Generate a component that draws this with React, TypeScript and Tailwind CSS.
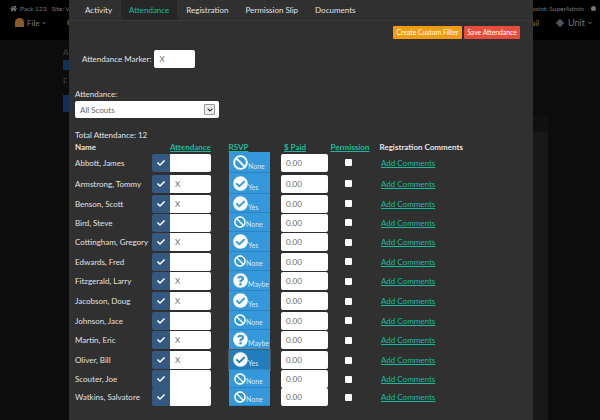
import { FaBan, FaCheck, FaCheckCircle, FaChevronDown, FaHome, FaQuestionCircle } from 'react-icons/fa';

type Rsvp = 'None' | 'Yes' | 'Maybe';

type Row = {
    name: string;
    marker: string;
    rsvp: Rsvp;
    height: string;
    big: boolean;
    active?: boolean;
};

const rows: Row[] = [
    { name: 'Abbott, James', marker: '', rsvp: 'None', height: 'h-[21px]', big: true },
    { name: 'Armstrong, Tommy', marker: 'X', rsvp: 'Yes', height: 'h-[21px]', big: true },
    { name: 'Benson, Scott', marker: 'X', rsvp: 'Yes', height: 'h-[19px]', big: true },
    { name: 'Bird, Steve', marker: '', rsvp: 'None', height: 'h-[19px]', big: false },
    { name: 'Cottingham, Gregory', marker: 'X', rsvp: 'Yes', height: 'h-[20px]', big: true },
    { name: 'Edwards, Fred', marker: '', rsvp: 'None', height: 'h-[19px]', big: false },
    { name: 'Fitzgerald, Larry', marker: 'X', rsvp: 'Maybe', height: 'h-[20px]', big: true },
    { name: 'Jacobson, Doug', marker: 'X', rsvp: 'Yes', height: 'h-[20px]', big: true },
    { name: 'Johnson, Jace', marker: '', rsvp: 'None', height: 'h-[19px]', big: false },
    { name: 'Martin, Eric', marker: 'X', rsvp: 'Maybe', height: 'h-[20px]', big: true },
    { name: 'Oliver, Bill', marker: 'X', rsvp: 'Yes', height: 'h-[20px]', big: true, active: true },
    { name: 'Scouter, Joe', marker: '', rsvp: 'None', height: 'h-[18px]', big: false },
    { name: 'Watkins, Salvatore', marker: '', rsvp: 'None', height: 'h-[18px]', big: false },
];

const tabs = ['Activity', 'Attendance', 'Registration', 'Permission Slip', 'Documents'];

function RsvpIcon({ rsvp, big }: { rsvp: Rsvp; big: boolean }) {
    const size = big ? 15 : 12;
    if (rsvp === 'Yes') return <FaCheckCircle size={size} className="shrink-0" />;
    if (rsvp === 'Maybe') return <FaQuestionCircle size={size} className="shrink-0" />;
    return <FaBan size={size} className="shrink-0" />;
}

function AttendanceRow({ row }: { row: Row }) {
    return (
        <div className={`flex items-center ${row.height}`}>
            <div className="w-[83px] whitespace-nowrap pl-[6px] text-[8px] text-[#e0e0e0]">{row.name}</div>
            <div className="flex h-[18px] w-[59px] items-center">
                <div className="flex h-full w-[18px] items-center justify-center rounded-l-[2px] bg-[#34587f] text-white">
                    <FaCheck size={8} />
                </div>
                <div className="flex h-full flex-1 items-center rounded-r-[2px] bg-white pl-[5px] text-[8px] text-[#666]">{row.marker}</div>
            </div>
            <div
                className={`ml-[18px] flex h-full w-[41px] items-end border-b border-[#2c85c2] text-white ${row.active ? 'bg-[#217dbb] outline outline-[#555]' : 'bg-[#3498db]'} ${row.big ? 'pl-[4px]' : 'pl-[5px]'}`}
            >
                <div className="flex items-end self-center">
                    <RsvpIcon rsvp={row.rsvp} big={row.big} />
                    <span className="mb-[-1px] text-[7px] leading-[9px] text-[#d5e9f7]">{row.rsvp}</span>
                </div>
            </div>
            <div className="ml-[11px] flex h-[18px] w-[47px] items-center rounded-[2px] bg-white pl-[5px] text-[8px] text-[#666]">0.00</div>
            <div className="flex w-[40px] justify-center">
                <input type="checkbox" readOnly className="h-[7px] w-[7px] appearance-none rounded-[1px] bg-white" />
            </div>
            <a className="ml-[13px] text-[8px] text-[#18bc9c] underline">Add Comments</a>
        </div>
    );
}

export default function App() {
    return (
        <div className="relative h-[420px] w-[600px] overflow-hidden bg-[#0c0c0c] font-['Lato','Liberation_Sans',sans-serif]">
            <div className="h-[40px] bg-black text-[#777]">
                <div className="flex h-[9px] items-center justify-between pl-[10px] pr-[4px] pt-[8px] text-[6.5px]">
                    <div className="flex items-center gap-[3px]">
                        <FaHome size={7} />
                        <span>Pack 123</span>
                        <span className="ml-[2px]">Site: VA</span>
                    </div>
                    <div className="flex items-center gap-[7px]">
                        <span>Rapoint: SuperAdmin</span>
                        <span className="h-[5px] w-[5px] rounded-full bg-[#777]" />
                    </div>
                </div>
                <div className="flex items-center justify-between pl-[15px] pr-[8px] pt-[7px] text-[8px]">
                    <div className="flex items-center gap-[3px]">
                        <span className="h-[9px] w-[9px] rounded-t-full bg-[#8a5a24]" />
                        <span>File</span>
                        <span className="ml-[-1px]"><FaChevronDown size={4} /></span>
                        <span className="ml-[18px] h-[7px] w-[10px] rounded-full bg-[#3f4a22]" />
                    </div>
                    <div className="flex items-center gap-[3px]">
                        <span className="mr-[15px]">Email</span>
                        <span className="h-[6px] w-[6px] rotate-45 bg-[#4a5560]" />
                        <span className="ml-[2px] text-[9px]">Unit</span>
                        <FaChevronDown size={4} />
                    </div>
                </div>
            </div>
            <div className="flex h-[380px] justify-between">
                <div className="pl-[63px] pt-[6px] text-[8px] text-[#444]">
                    <div>A</div>
                    <div className="mt-[2px] h-[10px] w-[6px] bg-[#12315a]" />
                    <div className="mt-[5px]">F</div>
                    <div className="mt-[8px] h-[17px] w-[6px] bg-[#12315a]" />
                </div>
                <div className="w-[67px] pt-[75px]">
                    <div className="h-[17px] w-[15px] bg-[#101010]" />
                    <div className="h-[288px] w-[15px] bg-[#181818]" />
                </div>
            </div>

            <div className="absolute left-[69px] top-0 h-[420px] w-[464px] bg-[#303030]">
                <div className="flex h-[21px] items-stretch gap-[1px] border-b border-[#383838] pl-[8px]">
                    {tabs.map((tab) => (
                        <div
                            key={tab}
                            className={`flex items-center px-[8px] text-[8px] ${tab === 'Attendance' ? 'bg-[#262626] text-[#18bc9c]' : 'text-[#e0e0e0]'}`}
                        >
                            {tab}
                        </div>
                    ))}
                </div>
                <div className="mt-[5px] flex justify-end gap-[2px] pr-[13px]">
                    <button className="h-[13px] w-[69px] whitespace-nowrap rounded-[1px] bg-[#f39c12] text-[6.8px] text-white">Create Custom Filter</button>
                    <button className="h-[13px] w-[56px] whitespace-nowrap rounded-[1px] bg-[#e74c3c] text-[6.8px] text-white">Save Attendance</button>
                </div>
                <div className="mt-[11px] flex items-center pl-[13px]">
                    <span className="text-[8px] text-[#e0e0e0]">Attendance Marker:</span>
                    <div className="ml-[3px] flex h-[18px] w-[41px] items-center rounded-[2px] bg-white pl-[5px] text-[8px] text-[#666]">X</div>
                </div>
                <div className="mt-[21px] pl-[6px] text-[8px] leading-[11px] text-[#e0e0e0]">Attendance:</div>
                <div className="ml-[6px] mt-[1px] flex h-[17px] w-[144px] items-center justify-between rounded-[2px] bg-white pl-[5px] pr-[4px] text-[8px] text-[#666]">
                    <span>All Scouts</span>
                    <span className="flex h-[11px] w-[11px] items-center justify-center rounded-[1px] border border-[#999] bg-[#eee] text-[#222]">
                        <FaChevronDown size={6} />
                    </span>
                </div>
                <div className="mt-[11px] pl-[6px] text-[8px] leading-[12px] text-[#e0e0e0]">Total Attendance: 12</div>
                <div className="mt-[1px] flex h-[10px] items-center text-[8px] font-bold">
                    <div className="w-[101px] pl-[6px] text-[#e6e6e6]">Name</div>
                    <div className="w-[58.5px] text-[#18bc9c] underline">Attendance</div>
                    <div className="w-[55.5px] text-[#18bc9c] underline">RSVP</div>
                    <div className="w-[46.5px] text-[#18bc9c] underline">$ Paid</div>
                    <div className="w-[49px] text-[#18bc9c] underline">Permission</div>
                    <div className="whitespace-nowrap text-[#e6e6e6]">Registration Comments</div>
                </div>
                <div>
                    {rows.map((row) => (
                        <AttendanceRow key={row.name} row={row} />
                    ))}
                </div>
            </div>
        </div>
    );
}
